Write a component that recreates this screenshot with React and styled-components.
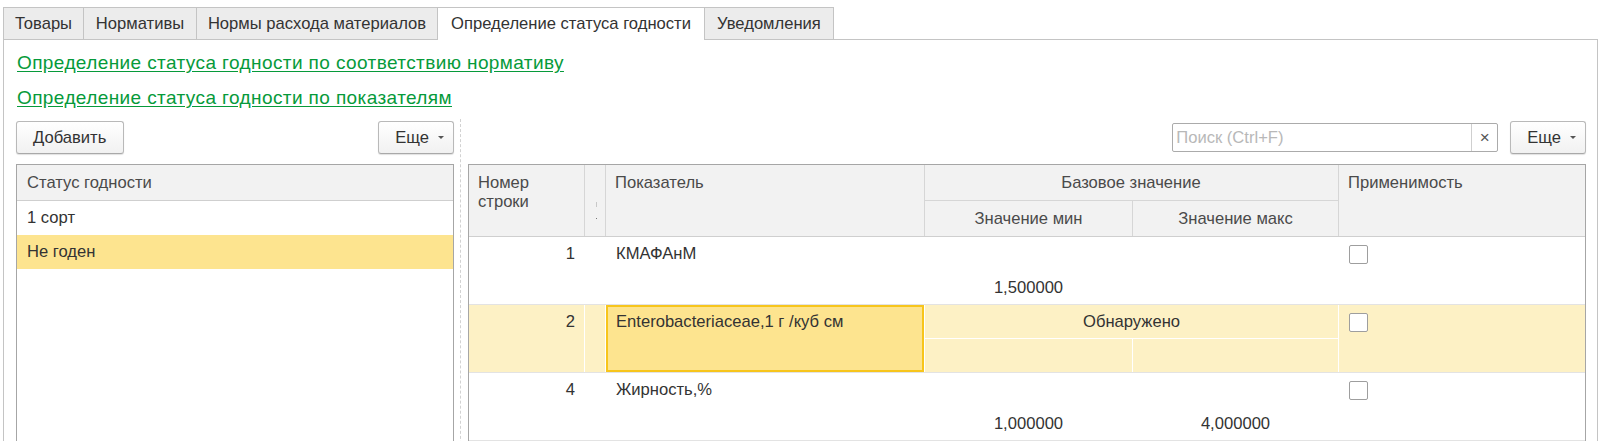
import React from "react";
import styled, { createGlobalStyle } from "styled-components";

const GlobalStyle = createGlobalStyle`
  html, body {
    margin: 0;
    padding: 0;
    background: #fff;
    overflow: hidden;
  }
  body {
    font-family: "Liberation Sans", Arial, sans-serif;
    font-size: 16.6px;
    color: #333;
  }
`;

const tabs = [
  { title: "Товары", width: 81 },
  { title: "Нормативы", width: 114 },
  { title: "Нормы расхода материалов", width: 242 },
  { title: "Определение статуса годности", width: 268, active: true },
  { title: "Уведомления", width: 130 },
];

const statuses = [
  { name: "1 сорт", selected: false },
  { name: "Не годен", selected: true },
];

const indicators = [
  { n: 1, name: "КМАФАнМ", min: "1,500000", max: "" },
  { n: 2, name: "Enterobacteriaceae,1 г /куб см", text: "Обнаружено", current: true },
  { n: 4, name: "Жирность,%", min: "1,000000", max: "4,000000" },
];

function App() {
  return (
    <Page>
      <GlobalStyle />
      <TabStrip>
        {tabs.map((t) => (
          <Tab key={t.title} $active={t.active} $w={t.width}>
            {t.title}
          </Tab>
        ))}
      </TabStrip>
      <Panel>
        <LinkList>
          <GreenLink href="#">Определение статуса годности по соответствию нормативу</GreenLink>
          <GreenLink href="#">Определение статуса годности по показателям</GreenLink>
        </LinkList>

        <Columns>
          <Column>
            <Toolbar>
              <Button>Добавить</Button>
              <MoreButton />
            </Toolbar>
            <ListTable>
              <ListHead>Статус годности</ListHead>
              {statuses.map((s) => (
                <ListRow key={s.name} $selected={s.selected}>
                  {s.name}
                </ListRow>
              ))}
            </ListTable>
          </Column>

          <Splitter />

          <Column>
            <Toolbar $right>
              <Search>
                <SearchText>Поиск (Ctrl+F)</SearchText>
                <ClearBox>×</ClearBox>
              </Search>
              <MoreButton />
            </Toolbar>
            <GridTable>
              <HeadGrid>
                <HeadCell $rows="1 / 3" $col="1">Номер<br />строки</HeadCell>
                <HeadCell $rows="1 / 3" $col="2">
                  <MarkIcon />
                </HeadCell>
                <HeadCell $rows="1 / 3" $col="3">Показатель</HeadCell>
                <HeadCell $rows="1" $col="4 / 6" $center>Базовое значение</HeadCell>
                <HeadCell $rows="2" $col="4" $center $middle>Значение мин</HeadCell>
                <HeadCell $rows="2" $col="5" $center $middle>Значение макс</HeadCell>
                <HeadCell $rows="1 / 3" $col="6">Применимость</HeadCell>
              </HeadGrid>
              {indicators.map((r) => (
                <DataRow key={r.n} $current={r.current}>
                  <Cell $rows="1 / 3" $col="1" $right>{r.n}</Cell>
                  <Cell $rows="1 / 3" $col="2" />
                  <Cell $rows="1 / 3" $col="3" $focused={r.current}>{r.name}</Cell>
                  <Cell $rows="1" $col="4 / 6" $center $line>{r.text}</Cell>
                  <Cell $rows="2" $col="4" $center>{r.min}</Cell>
                  <Cell $rows="2" $col="5" $center>{r.max}</Cell>
                  <Cell $rows="1 / 3" $col="6">
                    <Checkbox />
                  </Cell>
                </DataRow>
              ))}
            </GridTable>
          </Column>
        </Columns>
      </Panel>
    </Page>
  );
}

export default App;

function MoreButton() {
  return (
    <Button $more>
      Еще
      <Caret />
    </Button>
  );
}

function MarkIcon() {
  return (
    <svg width="3" height="22" viewBox="0 0 3 22">
      <rect x="1" y="0" width="1" height="5" fill="#c8c8c8" />
      <rect x="1" y="16" width="1" height="1" fill="#777" />
    </svg>
  );
}

const Page = styled.div`
  padding: 7px 7px 0 3px;
`;

const TabStrip = styled.div`
  display: flex;
  align-items: flex-end;
  position: relative;
  z-index: 1;
`;

const Tab = styled.div`
  box-sizing: border-box;
  width: ${({ $w }) => $w}px;
  height: ${({ $active }) => ($active ? "33px" : "32px")};
  margin-bottom: ${({ $active }) => ($active ? "-1px" : "0")};
  margin-right: -1px;
  line-height: 31px;
  text-align: center;
  border: 1px solid #c4c4c4;
  border-bottom: none;
  background: ${({ $active }) => ($active ? "#fff" : "#ececec")};
  color: #333;
  white-space: nowrap;
`;

const Panel = styled.div`
  box-sizing: border-box;
  height: 420px;
  border: 1px solid #c4c4c4;
  padding: 0 11px 0 12px;
`;

const LinkList = styled.div`
  display: flex;
  flex-direction: column;
  align-items: flex-start;
  gap: 15px;
  padding-top: 13px;
`;

const GreenLink = styled.a`
  font-size: 19px;
  letter-spacing: 0.4px;
  line-height: 20px;
  color: #069a3a;
  text-decoration: underline;
  text-underline-offset: 2px;
  margin-left: 1px;
`;

const Columns = styled.div`
  display: grid;
  grid-template-columns: 438px 14px 1fr;
  margin-top: 11px;
  height: 340px;
`;

const Column = styled.div`
  display: flex;
  flex-direction: column;
  padding-top: 2px;
  min-width: 0;
`;

const Splitter = styled.div`
  justify-self: center;
  width: 0;
  border-left: 1px dashed #d2d2d2;
  margin-right: 1px;
`;

const Toolbar = styled.div`
  display: flex;
  align-items: center;
  justify-content: ${({ $right }) => ($right ? "flex-end" : "space-between")};
  gap: 12px;
  height: 33px;
  margin-bottom: 10px;
`;

const Button = styled.div`
  box-sizing: border-box;
  height: 33px;
  display: flex;
  align-items: center;
  gap: 9px;
  padding: ${({ $more }) => ($more ? "0 9px 0 16px" : "0 16px")};
  min-width: ${({ $more }) => ($more ? "74px" : "108px")};
  border: 1px solid #b9b9b9;
  border-bottom-color: #a9a9a9;
  border-radius: 3px;
  background: linear-gradient(#ffffff, #f1f1f1);
  box-shadow: 0 1px 1px rgba(0, 0, 0, 0.12);
  color: #333;
`;

const Caret = styled.span`
  width: 0;
  height: 0;
  border-left: 3px solid transparent;
  border-right: 3px solid transparent;
  border-top: 3px solid #555;
`;

const Search = styled.div`
  box-sizing: border-box;
  width: 326px;
  height: 29px;
  display: flex;
  border: 1px solid #ababab;
  border-radius: 2px;
  background: #fff;
`;

const SearchText = styled.div`
  flex: 1;
  padding-left: 3px;
  line-height: 27px;
  color: #b8b8b8;
`;

const ClearBox = styled.div`
  width: 25px;
  border-left: 1px solid #cfcfcf;
  display: flex;
  align-items: center;
  justify-content: center;
  font-size: 17px;
  color: #555;
`;

const ListTable = styled.div`
  flex: 1;
  border: 1px solid #a6a6a6;
`;

const ListHead = styled.div`
  height: 35px;
  line-height: 35px;
  padding-left: 10px;
  background: #f2f2f2;
  border-bottom: 1px solid #cfcfcf;
  color: #4a4a4a;
`;

const ListRow = styled.div`
  height: 34px;
  line-height: 34px;
  padding-left: 10px;
  background: ${({ $selected }) => ($selected ? "#fde48f" : "#fff")};
  color: #333;
`;

const GridTable = styled.div`
  flex: 1;
  border: 1px solid #a6a6a6;
`;

const cols = "116px 21px 319px 208px 206px 1fr";

const HeadGrid = styled.div`
  display: grid;
  grid-template-columns: ${cols};
  grid-template-rows: 36px 35px;
  border-bottom: 1px solid #cfcfcf;
  background: #f2f2f2;
`;

const HeadCell = styled.div`
  grid-row: ${({ $rows }) => $rows};
  grid-column: ${({ $col }) => $col};
  box-sizing: border-box;
  display: flex;
  flex-direction: column;
  align-items: ${({ $center }) => ($center ? "center" : "flex-start")};
  justify-content: ${({ $middle }) => ($middle ? "center" : "flex-start")};
  padding: ${({ $middle }) => ($middle ? "0 10px" : "8px 10px 0 9px")};
  line-height: 19px;
  border-right: 1px solid #d6d6d6;
  border-bottom: ${({ $rows }) => ($rows === "1" ? "1px solid #d6d6d6" : "none")};
  color: #4a4a4a;
  &:last-child {
    border-right: none;
  }
  svg {
    margin-top: 29px;
    margin-left: 1px;
  }
`;

const DataRow = styled.div`
  display: grid;
  grid-template-columns: ${cols};
  grid-template-rows: 34px 33px;
  border-bottom: 1px solid #e3e3e3;
  background: ${({ $current }) => ($current ? "#fdf1c5" : "#fff")};
`;

const Cell = styled.div`
  grid-row: ${({ $rows }) => $rows};
  grid-column: ${({ $col }) => $col};
  box-sizing: border-box;
  display: flex;
  align-items: ${({ $rows }) => ($rows === "2" || $rows === "1" ? "center" : "flex-start")};
  justify-content: ${({ $right, $center }) =>
    $right ? "flex-end" : $center ? "center" : "flex-start"};
  padding: ${({ $rows }) => ($rows === "2" || $rows === "1" ? "0 10px" : "7px 9px 0 10px")};
  line-height: 20px;
  border-right: 1px solid #fff;
  border-bottom: ${({ $line }) => ($line ? "1px solid #fff" : "none")};
  color: #333;
  &:last-child {
    border-right: none;
  }
  ${({ $focused }) =>
    $focused &&
    `
    background: #fde48f;
    box-shadow: inset 0 0 0 2px #f7c51c;
  `}
`;

const Checkbox = styled.span`
  box-sizing: border-box;
  width: 19px;
  height: 19px;
  margin-top: 1px;
  border: 1px solid #9e9e9e;
  border-radius: 2px;
  background: #fff;
`;
